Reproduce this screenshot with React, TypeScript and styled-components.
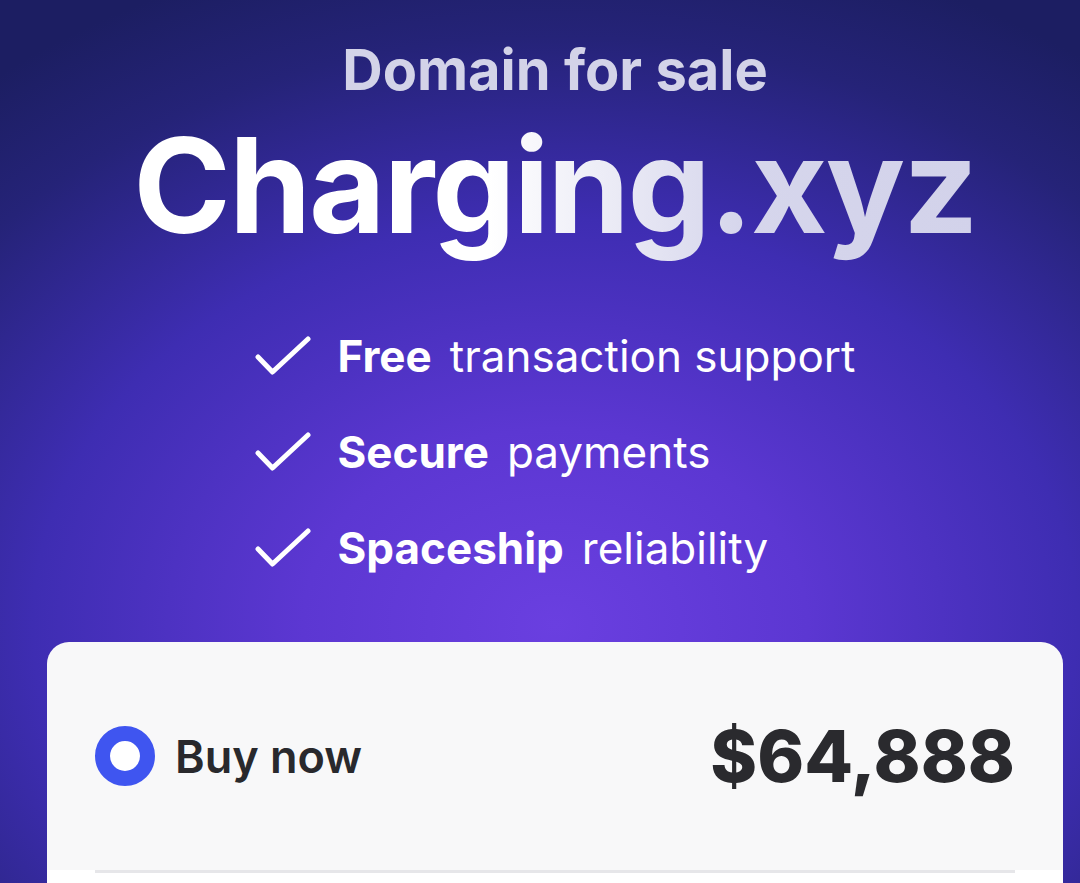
import React from "react";
import styled, { createGlobalStyle } from "styled-components";

const Global = createGlobalStyle`
  html, body { margin: 0; padding: 0; }
  body {
    font-family: "Inter", "Lato", sans-serif;
    background: #1c1e62;
    overflow: hidden;
  }
`;

const Page = styled.div`
  width: 1080px;
  height: 883px;
  overflow: hidden;
  box-sizing: border-box;
  padding-left: 30px;
  background: radial-gradient(
    ellipse 900px 700px at 555px 625px,
    #6a3fe0 0%,
    #5c37d2 28%,
    #3e2db2 58%,
    #252378 84%,
    #1c1e62 100%
  );
`;

const Content = styled.div`
  width: 1050px;
  display: flex;
  flex-direction: column;
  align-items: center;
  padding-top: 42px;
`;

const Eyebrow = styled.div`
  font-size: 56px;
  line-height: 1;
  font-weight: 700;
  color: #d3d3e8;
`;

const Title = styled.h1`
  margin: 21px 0 -0.25em;
  padding-bottom: 0.25em;
  font-size: 132px;
  line-height: 1;
  font-weight: 700;
  letter-spacing: -2px;
  background: linear-gradient(90deg, #ffffff 0%, #ffffff 42%, #d6d6ec 72%, #d2d2ea 100%);
  -webkit-background-clip: text;
  background-clip: text;
  color: transparent;
`;

const Features = styled.ul`
  list-style: none;
  margin: 83px 0 0;
  padding: 0;
  display: flex;
  flex-direction: column;
  gap: 52px;
`;

const Feature = styled.li`
  display: flex;
  align-items: center;
  height: 44px;
  line-height: 44px;
  font-size: 44px;
  color: #ffffff;
`;

const Check = styled.svg`
  width: 56px;
  height: 42px;
  flex: none;
  margin-right: 27px;
`;

const Strong = styled.strong`
  font-weight: 700;
  margin-right: 18px;
`;

const Light = styled.span`
  font-weight: 400;
`;

const Card = styled.section`
  align-self: stretch;
  margin: 72px 17px 0;
  background: #f8f8f9;
  border-radius: 22px 22px 0 0;
  overflow: hidden;
`;

const OptionRow = styled.div`
  height: 228px;
  padding: 0 48px;
  display: flex;
  align-items: center;
  justify-content: space-between;
`;

const OptionLabel = styled.div`
  display: flex;
  align-items: center;
  gap: 20px;
  font-size: 45px;
  font-weight: 600;
  color: #29292d;
`;

const Radio = styled.span`
  width: 60px;
  height: 60px;
  box-sizing: border-box;
  border-radius: 50%;
  border: 15px solid #3f55f0;
  background: #ffffff;
`;

const Price = styled.div`
  font-size: 71px;
  font-weight: 800;
  color: #2a2a2e;
`;

const CardFooter = styled.div`
  background: #ffffff;
  padding: 0 48px;
  height: 40px;
`;

const Divider = styled.div`
  border-top: 3px solid #e6e6e9;
`;

const CheckIcon = () => (
  <Check viewBox="0 0 56 42" fill="none">
    <path
      d="M3 22 L17.5 37 L53 4"
      stroke="#ffffff"
      strokeWidth={5}
      strokeLinecap="round"
      strokeLinejoin="round"
    />
  </Check>
);

const features = [
  ["Free", "transaction support"],
  ["Secure", "payments"],
  ["Spaceship", "reliability"],
];

export default function App() {
  return (
    <>
      <Global />
      <Page>
        <Content>
          <Eyebrow>Domain for sale</Eyebrow>
          <Title>Charging.xyz</Title>
          <Features>
            {features.map(([b, r]) => (
              <Feature key={b}>
                <CheckIcon />
                <Strong>{b}</Strong>
                <Light>{r}</Light>
              </Feature>
            ))}
          </Features>
          <Card>
            <OptionRow>
              <OptionLabel>
                <Radio />
                Buy now
              </OptionLabel>
              <Price>$64,888</Price>
            </OptionRow>
            <CardFooter>
              <Divider />
            </CardFooter>
          </Card>
        </Content>
      </Page>
    </>
  );
}
